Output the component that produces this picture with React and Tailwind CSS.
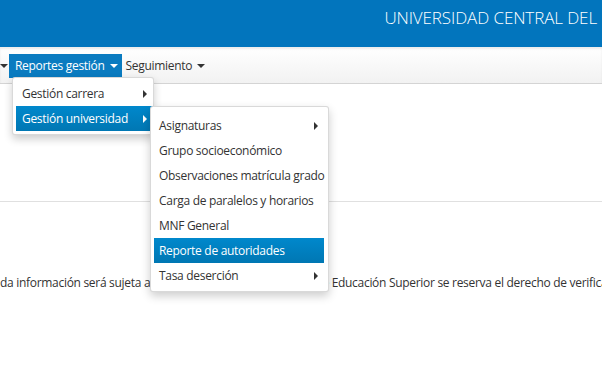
import React from 'react';

const DownCaret = ({ color = 'border-t-[#333]' }) => (
  <span className={`inline-block w-0 h-0 border-l-[4px] border-r-[4px] border-t-[4px] border-l-transparent border-r-transparent ${color} align-middle`} />
);

const RightCaret = ({ color = 'border-l-[#333]' }) => (
  <span className={`inline-block w-0 h-0 border-t-[4px] border-b-[4px] border-l-[4px] border-t-transparent border-b-transparent ${color}`} />
);

const MenuItem = ({ label, active, sub }) => (
  <li
    className={`flex items-center justify-between h-[25px] pl-[5px] pr-[6px] whitespace-nowrap ${
      active ? 'bg-gradient-to-b from-[#0088cc] to-[#0077b3] text-white' : 'text-[#333]'
    }`}
  >
    <span>{label}</span>
    {sub && <RightCaret color={active ? 'border-l-white' : 'border-l-[#333]'} />}
  </li>
);

const App = () => {
  const universidad = [
    { label: 'Asignaturas', sub: true },
    { label: 'Grupo socioeconómico' },
    { label: 'Observaciones matrícula grado' },
    { label: 'Carga de paralelos y horarios' },
    { label: 'MNF General' },
    { label: 'Reporte de autoridades', active: true },
    { label: 'Tasa deserción', sub: true },
  ];

  return (
    <div className="w-[602px] h-[371px] overflow-hidden bg-white text-[12px] tracking-[-0.3px] text-[#333]" style={{ fontFamily: '"Open Sans", "DejaVu Sans", sans-serif' }}>
      <header className="h-[47px] bg-[#0275bd] flex justify-end overflow-hidden">
        <h1 className="pt-[5px] pr-[5px] text-[17px] font-light text-white tracking-[-0.1px] whitespace-nowrap">UNIVERSIDAD CENTRAL DEL</h1>
      </header>

      <nav className="relative h-[37px] bg-gradient-to-b from-white to-[#f2f2f2] border-b border-[#d4d4d4] shadow-[inset_0_2px_2px_rgba(0,0,0,0.08)]">
        <div className="flex items-center h-full pt-[2px]">
          <span className="w-[10px] flex justify-center -ml-[1px]"><DownCaret /></span>
          <span className="flex items-center gap-[5px] h-[24px] pl-[6px] pr-[4px] bg-[#0a7bc0] text-white">
            Reportes gestión <DownCaret color="border-t-white" />
          </span>
          <span className="flex items-center gap-[5px] h-[24px] px-[4px]">
            Seguimiento <DownCaret />
          </span>
        </div>

        <ul className="absolute left-[12px] top-[30px] w-[142px] pt-[3px] pb-[3px] pl-[3px] bg-white border border-black/15 rounded-[3px] shadow-[0_4px_8px_rgba(0,0,0,0.2)] z-10">
          <li className="flex items-center justify-between h-[25px] pl-[6px] pr-[6px] whitespace-nowrap text-[#333]">
            <span>Gestión carrera</span>
            <RightCaret />
          </li>
          <li className="flex items-center justify-between h-[25px] pl-[6px] pr-[6px] whitespace-nowrap bg-gradient-to-b from-[#0088cc] to-[#0077b3] text-white">
            <span>Gestión universidad</span>
            <RightCaret color="border-l-white" />
          </li>
        </ul>

        <ul className="absolute left-[150px] top-[59px] w-[179px] pt-[6px] pb-[3px] pl-[3px] pr-[4px] bg-white border border-black/15 rounded-[3px] shadow-[0_4px_10px_rgba(0,0,0,0.2)] z-20">
          {universidad.map((item) => (
            <MenuItem key={item.label} {...item} />
          ))}
        </ul>
      </nav>

      <main>
        <div className="h-[117px]" />
        <hr className="border-0 border-t border-[#e0e0e0]" />
        <p className="mt-[72px] whitespace-nowrap">
          da información será sujeta a verificación, pues la Secretaría de Educación Superior se reserva el derecho de verificar
        </p>
      </main>
    </div>
  );
};

export default App;
